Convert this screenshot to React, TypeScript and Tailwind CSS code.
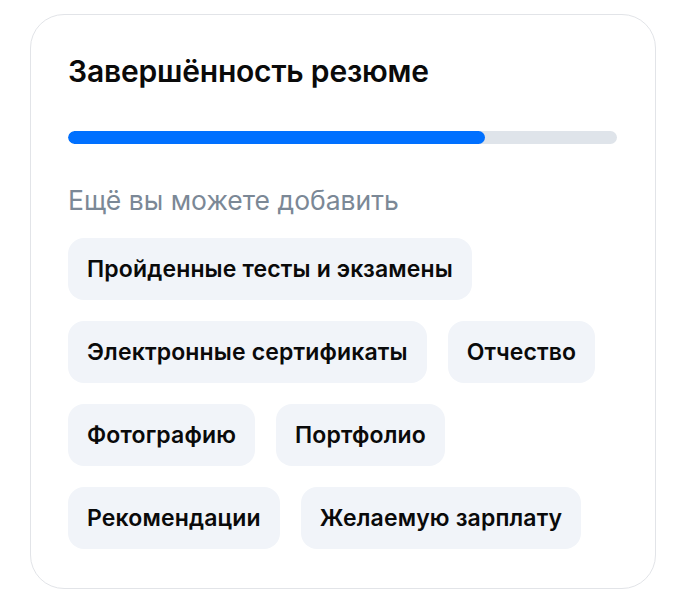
import React from "react";

const suggestions: string[][] = [
  ["Пройденные тесты и экзамены"],
  ["Электронные сертификаты", "Отчество"],
  ["Фотографию", "Портфолио"],
  ["Рекомендации", "Желаемую зарплату"],
];

export default function App() {
  const progress = 76;
  return (
    <div className="min-h-[610px] bg-white pl-[30px] pt-[14px]" style={{ fontFamily: "Inter, 'Noto Sans', sans-serif" }}>
      <div className="w-[626px] h-[575px] rounded-[34px] border border-[#e2e4e8] bg-white px-[37px] pt-[37px]">
        <h2 className="text-[30px] leading-[38px] font-semibold text-[#0a0a0a] tracking-[-0.2px]">
          Завершённость резюме
        </h2>
        <div className="mt-[41px] h-[13px] w-[549px] rounded-full bg-[#dfe4ea] overflow-hidden">
          <div className="h-full rounded-full bg-[#0070ff]" style={{ width: `${progress}%` }} />
        </div>
        <p className="mt-[39px] text-[26.5px] leading-[34px] text-[#7b8896]">Ещё вы можете добавить</p>
        <div className="mt-[21px] flex flex-col gap-[21px]">
          {suggestions.map((row, i) => (
            <div key={i} className="flex gap-[21px]">
              {row.map((s) => (
                <button
                  key={s}
                  className="h-[62px] rounded-[16px] bg-[#f1f4f9] px-[19px] text-[23px] tracking-[0.15px] font-semibold text-[#0a0a0a]"
                >
                  {s}
                </button>
              ))}
            </div>
          ))}
        </div>
      </div>
    </div>
  );
}
